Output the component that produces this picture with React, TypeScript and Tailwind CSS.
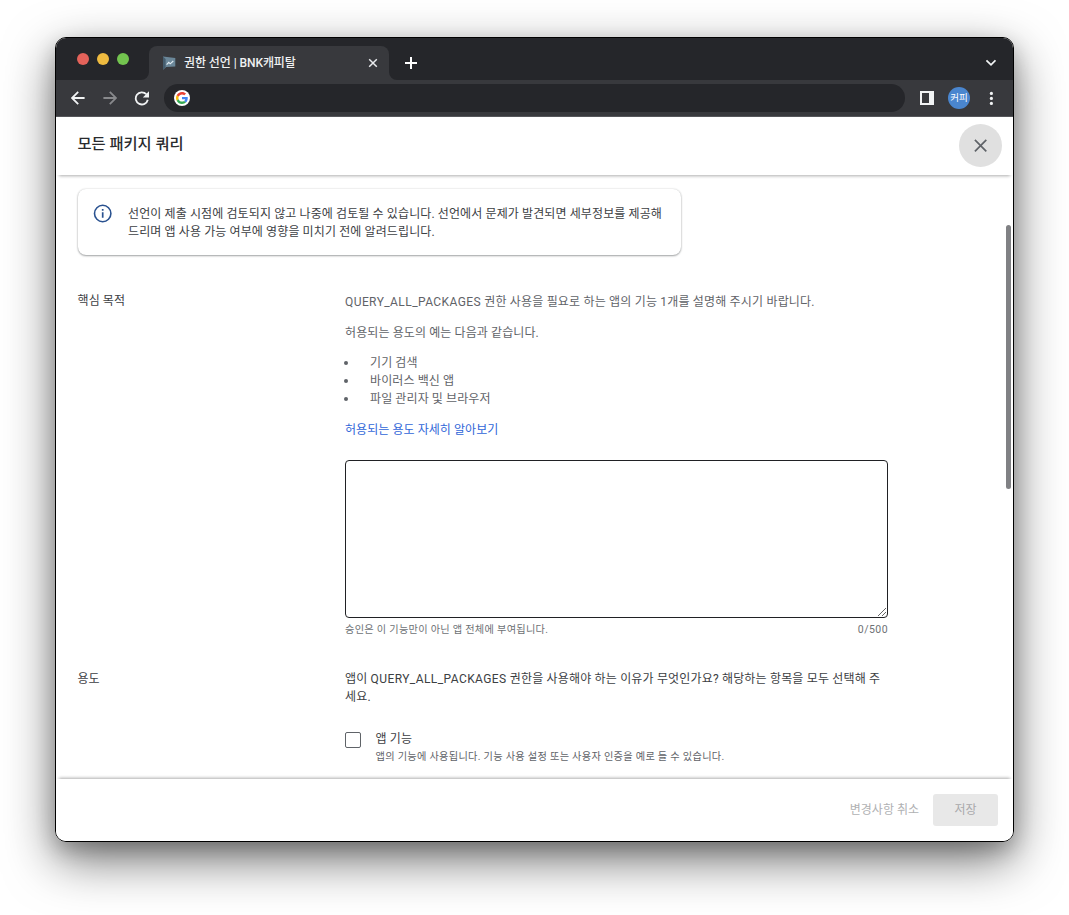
import React from "react";

function TabStrip() {
  return (
    <div className="flex h-[42px] shrink-0 items-end bg-[#25262a]">
      <div className="flex h-full w-[85px] shrink-0 items-center gap-2 pl-[21px]">
        <span className="size-3 rounded-full bg-[#e4625a]" />
        <span className="size-3 rounded-full bg-[#efbb40]" />
        <span className="size-3 rounded-full bg-[#73c44f]" />
      </div>
      <svg className="size-2 shrink-0 text-[#38393d]" viewBox="0 0 8 8">
        <path d="M8 0V8H0A8 8 0 0 0 8 0Z" fill="currentColor" />
      </svg>
      <div className="flex h-[34px] w-[240px] items-center rounded-t-lg bg-[#38393d] pl-[14px] pr-[10px]">
        <svg className="h-[14px] w-[13px] shrink-0" viewBox="0 0 13 14">
          <path d="M0 .5 12.3 2V10.5L3.2 11 0 13.8Z" fill="#6b8799" />
          <path d="M0 .5 2.6 3V11.3L0 13.8Z" fill="#455d6e" />
          <path d="M3.6 8.6 5.8 6.4 7.2 7.8 10.3 5" fill="none" stroke="#e3edf3" strokeWidth="1.1" />
        </svg>
        <span className="ml-2 grow whitespace-nowrap text-[12px] font-medium tracking-[-0.08px] text-[#f0f1f2]">
          권한 선언 | BNK캐피탈
        </span>
        <svg className="size-3 shrink-0" viewBox="0 0 12 12">
          <path d="M2.2 2.2 9.8 9.8M9.8 2.2 2.2 9.8" stroke="#e8eaed" strokeWidth="1.5" />
        </svg>
      </div>
      <svg className="size-2 shrink-0 text-[#38393d]" viewBox="0 0 8 8">
        <path d="M0 0V8H8A8 8 0 0 1 0 0Z" fill="currentColor" />
      </svg>
      <svg className="mb-[11px] ml-2 size-3 shrink-0" viewBox="0 0 12 12">
        <path d="M6 0V12M0 6H12" stroke="#fff" strokeWidth="2" />
      </svg>
      <svg className="mb-[13px] ml-auto mr-[17px] h-[9px] w-[11px] shrink-0" viewBox="0 0 11 9">
        <path d="M1.4 2.3 6 6.8 10.5 2.3" fill="none" stroke="#f1f3f4" strokeWidth="1.8" />
      </svg>
    </div>
  );
}

function Toolbar() {
  return (
    <div className="flex h-[37px] shrink-0 items-center border-b border-[#55565a] bg-[#38393d] pl-[15px] pr-5">
      <svg className="size-[14px] shrink-0" viewBox="0 0 14 14">
        <path d="M13.6 7H1.2M7.2 .8 1 7 7.2 13.2" fill="none" stroke="#f1f3f4" strokeWidth="1.8" />
      </svg>
      <svg className="ml-[18px] size-[14px] shrink-0" viewBox="0 0 14 14">
        <path d="M.4 7H12.8M6.8 .8 13 7 6.8 13.2" fill="none" stroke="#88898c" strokeWidth="1.8" />
      </svg>
      <svg className="ml-[17px] size-[15px] shrink-0" viewBox="0 0 15 15">
        <path d="M12.3 3.2A6.1 6.1 0 1 0 13.8 8.8" fill="none" stroke="#f1f3f4" strokeWidth="1.8" />
        <path d="M15 .3V6.5H8.8Z" fill="#f1f3f4" />
      </svg>
      <div className="ml-[15px] flex h-[28px] w-[741px] shrink-0 items-center rounded-full bg-[#25262a] pl-[10px]">
        <span className="flex size-4 items-center justify-center rounded-full bg-white">
          <svg className="size-3" viewBox="0 0 48 48">
            <path fill="#EA4335" d="M24 9.5c3.54 0 6.71 1.22 9.21 3.6l6.85-6.85C35.9 2.38 30.47 0 24 0 14.62 0 6.51 5.38 2.56 13.22l7.98 6.19C12.43 13.72 17.74 9.5 24 9.5z" />
            <path fill="#4285F4" d="M46.98 24.55c0-1.57-.15-3.09-.38-4.55H24v9.02h12.94c-.58 2.96-2.26 5.48-4.78 7.18l7.73 6c4.51-4.18 7.09-10.36 7.09-17.65z" />
            <path fill="#FBBC05" d="M10.53 28.59c-.48-1.45-.76-2.99-.76-4.59s.27-3.14.76-4.59l-7.98-6.19C.92 16.46 0 20.12 0 24c0 3.88.92 7.54 2.56 10.78l7.97-6.19z" />
            <path fill="#34A853" d="M24 48c6.48 0 11.93-2.13 15.89-5.81l-7.73-6c-2.15 1.45-4.92 2.3-8.16 2.3-6.26 0-11.57-4.22-13.47-9.91l-7.98 6.19C6.51 42.62 14.62 48 24 48z" />
          </svg>
        </span>
      </div>
      <svg className="ml-[15px] size-[14px] shrink-0" viewBox="0 0 14 14">
        <path fillRule="evenodd" fill="#f1f3f4" d="M0 0H14V14H0ZM2 2V12H9V2Z" />
      </svg>
      <span className="ml-[14px] flex size-[22px] shrink-0 items-center justify-center whitespace-nowrap rounded-full bg-[#4a86cf] text-[9.5px] leading-none text-white">
        커피
      </span>
      <svg className="ml-auto h-[14px] w-1 shrink-0" viewBox="0 0 4 14">
        <g fill="#f1f3f4">
          <circle cx="2.4" cy="2.4" r="1.6" />
          <circle cx="2.4" cy="7.4" r="1.6" />
          <circle cx="2.4" cy="12.4" r="1.6" />
        </g>
      </svg>
    </div>
  );
}

const uses = ["기기 검색", "바이러스 백신 앱", "파일 관리자 및 브라우저"];

function PermissionName() {
  return <span className="tracking-[0.42px]">QUERY_ALL_PACKAGES</span>;
}

export default function App() {
  return (
    <div className="h-[915px] w-[1069px] overflow-hidden bg-white pl-[55px] pt-[37px] font-['Roboto','Noto_Sans_CJK_KR',sans-serif] text-[12px] leading-[18px] text-[#3c4043]">
      <div className="h-[805px] w-[959px] rounded-[11px] shadow-[0_18px_50px_0_rgba(0,0,0,0.55),0_8px_20px_rgba(0,0,0,0.2)]">
        <div className="flex h-full flex-col overflow-hidden rounded-[11px] border border-black bg-white">
          <TabStrip />
          <Toolbar />

          <header className="z-10 flex h-[58px] shrink-0 items-center justify-between bg-white pb-px pl-[21.5px] pr-[11px] shadow-[0_4px_3px_-3px_rgba(0,0,0,0.32)]">
            <h1 className="pb-1 text-[15.3px] font-medium leading-5 text-[#2a2b2e]">모든 패키지 쿼리</h1>
            <button className="flex size-[43px] items-center justify-center rounded-full bg-[#e0e0e0]">
              <svg className="size-[14px]" viewBox="0 0 14 14">
                <path d="M.9 .9 12.3 12.3M12.3 .9 .9 12.3" stroke="#5f6368" strokeWidth="1.7" />
              </svg>
            </button>
          </header>

          <main className="flex min-h-0 grow justify-between overflow-hidden bg-white">
            <div className="pl-[22px] pt-[14px]">
              <section className="flex h-[66px] w-[603px] rounded-lg pl-[15px] pt-[15px] shadow-[0_1px_2px_rgba(60,64,67,0.45),0_0_2px_rgba(60,64,67,0.2)]">
                <svg className="size-[19px] shrink-0" viewBox="0 0 19 19">
                  <circle cx="9.7" cy="9.5" r="8.2" fill="none" stroke="#2a5290" strokeWidth="1.6" />
                  <path d="M9.7 8.3V13.8M9.7 5V6.8" stroke="#2a5290" strokeWidth="1.7" />
                </svg>
                <p className="ml-4 mt-px whitespace-nowrap tracking-[0.11px]">
                  선언이 제출 시점에 검토되지 않고 나중에 검토될 수 있습니다. 선언에서 문제가 발견되면 세부정보를 제공해
                  <br />
                  드리며 앱 사용 가능 여부에 영향을 미치기 전에 알려드립니다.
                </p>
              </section>

              <section className="mt-[37px] flex">
                <h2 className="-ml-[0.5px] w-[267.5px] shrink-0 tracking-[0.1px]">핵심 목적</h2>
                <div className="w-[543px] pt-px tracking-[0.1px] text-[#5f6368]">
                  <p className="whitespace-nowrap tracking-[0.18px]">
                    <PermissionName /> 권한 사용을 필요로 하는 앱의 기능 1개를 설명해 주시기 바랍니다.
                  </p>
                  <p className="mt-[13px]">허용되는 용도의 예는 다음과 같습니다.</p>
                  <ul className="mt-3">
                    {uses.map((use) => (
                      <li key={use} className="flex items-center">
                        <span className="-ml-px size-1 rounded-full bg-[#5f6368]" />
                        <span className="ml-[22px]">{use}</span>
                      </li>
                    ))}
                  </ul>
                  <a className="mt-[13px] block tracking-[0.06px] text-[#2f66d8]">허용되는 용도 자세히 알아보기</a>
                  <div className="mt-[21px] flex h-[158px] items-end justify-end rounded-[4px] border border-[#202124] p-px">
                    <svg className="size-2" viewBox="0 0 8 8">
                      <path d="M0 8 8 0M4 8 8 4" stroke="#555" strokeWidth=".9" />
                    </svg>
                  </div>
                  <div className="mt-[3px] flex justify-between text-[10.2px] leading-[17px] tracking-[0.28px] text-[#6d7175]">
                    <span>승인은 이 기능만이 아닌 앱 전체에 부여됩니다.</span>
                    <span className="text-[10.5px] tracking-[0.45px]">0/500</span>
                  </div>
                </div>
              </section>

              <section className="mt-8 flex">
                <h2 className="-ml-[0.5px] w-[267.5px] shrink-0">용도</h2>
                <div className="w-[543px]">
                  <p className="whitespace-nowrap tracking-[0.17px]">
                    앱이 <PermissionName /> 권한을 사용해야 하는 이유가 무엇인가요? 해당하는 항목을 모두 선택해 주
                    <br />
                    세요.
                  </p>
                  <div className="mt-6 flex">
                    <span className="mt-[2px] size-4 shrink-0 rounded-[2px] border border-[#5f6368]" />
                    <div className="ml-[14.5px]">
                      <p className="tracking-[0.15px]">앱 기능</p>
                      <p className="whitespace-nowrap text-[10.2px] tracking-[0.29px] text-[#5f6368]">
                        앱의 기능에 사용됩니다. 기능 사용 설정 또는 사용자 인증을 예로 들 수 있습니다.
                      </p>
                    </div>
                  </div>
                </div>
              </section>
            </div>
            <div className="mr-[2px] mt-[50px] h-[264px] w-[5px] rounded-full bg-[#808184]" />
          </main>

          <footer className="z-10 flex h-[62px] shrink-0 items-center justify-end bg-white pr-[15px] text-[#b0b1b3] shadow-[0_-4px_3px_-3px_rgba(0,0,0,0.32)]">
            <span>변경사항 취소</span>
            <span className="ml-[14px] flex h-8 w-[65px] items-center justify-center rounded-[3px] bg-[#e8e8e8] text-[#a8a9ab]">
              저장
            </span>
          </footer>
        </div>
      </div>
    </div>
  );
}
